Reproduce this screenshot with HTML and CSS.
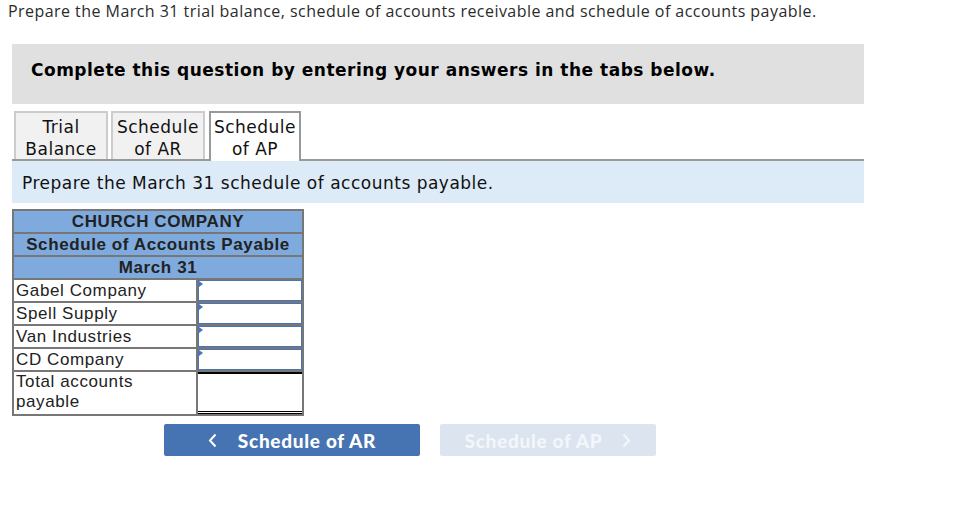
FILE: index.html
```html
<!DOCTYPE html>
<html>
<head>
<meta charset="utf-8">
<link rel="stylesheet" href="styles.css">
</head>
<body>
<p class="intro">Prepare the March 31 trial balance, schedule of accounts receivable and schedule of accounts payable.</p>
<div class="banner">Complete this question by entering your answers in the tabs below.</div>
<div class="tabs">
  <div class="tab">Trial<br>Balance</div>
  <div class="tab">Schedule<br>of AR</div>
  <div class="tab active">Schedule<br>of AP</div>
</div>
<div class="instr">Prepare the March 31 schedule of accounts payable.</div>
<table class="sched">
  <tr><th colspan="2">CHURCH COMPANY</th></tr>
  <tr><th colspan="2">Schedule of Accounts Payable</th></tr>
  <tr><th colspan="2">March 31</th></tr>
  <tr><td class="lbl">Gabel Company</td><td class="val"><div class="inp"></div></td></tr>
  <tr><td class="lbl">Spell Supply</td><td class="val"><div class="inp"></div></td></tr>
  <tr><td class="lbl">Van Industries</td><td class="val"><div class="inp"></div></td></tr>
  <tr><td class="lbl">CD Company</td><td class="val"><div class="inp"></div></td></tr>
  <tr class="total"><td class="lbl">Total accounts<br>payable</td><td class="val tot"><div class="totbox"></div></td></tr>
</table>
<div class="nav">
  <div class="btn prev"><svg class="chev" width="9" height="15" viewBox="0 0 9 15"><path d="M7.5 1.5 L2 7.5 L7.5 13.5" fill="none" stroke="#fff" stroke-width="2"/></svg>Schedule of AR</div>
  <div class="btn next">Schedule of AP<svg class="chev r" width="9" height="15" viewBox="0 0 9 15"><path d="M1.5 1.5 L7 7.5 L1.5 13.5" fill="none" stroke="#f3f6fa" stroke-width="2"/></svg></div>
</div>
</body>
</html>
```
FILE: styles.css
```css
html, body { margin: 0; padding: 0; background: #fff; }
body { padding: 0 8px; font-family: "Open Sans", "Lato", sans-serif; color: #222; }
.intro { margin: 0; padding-top: 1px; font-size: 16px; letter-spacing: 0.45px; line-height: 20px; color: #2b2b2b; }
.banner {
  margin: 23px 0 0 4px; width: 852px; height: 60px; box-sizing: border-box;
  background: #e0e0e0; padding: 15px 0 0 19px;
  font-family: "DejaVu Sans", Verdana, sans-serif; font-weight: bold; font-size: 17px; letter-spacing: 0.5px; color: #000; line-height: 22px;
}
.tabs {
  margin: 7px 0 0 4px; width: 852px; display: flex; gap: 3px;
  border-bottom: 2px solid #999; padding-left: 2px; box-sizing: border-box; height: 50px;
}
.tab {
  width: 94px; height: 48px; box-sizing: border-box; border: 2px solid #ccc; border-bottom: none;
  background: #f1f1f1; text-align: center; font-family: "DejaVu Sans", Verdana, sans-serif;
  font-size: 17px; letter-spacing: 0.5px; line-height: 22px; color: #111; padding-top: 3px;
}
.tab.active { background: #fff; border-color: #999; height: 50px; margin-bottom: -2px; margin-left: 1px; width: 92px; }
.instr {
  margin-left: 4px; width: 852px; height: 42px; box-sizing: border-box; background: #ddebf8;
  font-family: "DejaVu Sans", Verdana, sans-serif; font-size: 17px; letter-spacing: 0.5px; line-height: 44px; padding-left: 10px; color: #111;
}
.sched {
  margin: 6px 0 0 4px; border-collapse: collapse; width: 292px;
  font-family: "Liberation Sans", Arial, sans-serif; font-size: 17px; letter-spacing: 0.6px; color: #222;
}
.sched th, .sched td { border: 2px solid #777; padding: 0; }
.sched th { background: #7eaade; font-weight: bold; height: 21px; line-height: 19px; text-align: center; }
.sched td { height: 21px; line-height: 19px; }
.sched td.lbl { width: 180px; padding-left: 2px; text-align: left; white-space: nowrap; }
.sched td.val { width: 104px; padding: 0; vertical-align: top; }
.inp {
  height: 19px; border: 1px solid #4b74b4; margin: 0; position: relative; background: #fff;
}
.inp::before {
  content: ""; position: absolute; left: 0; top: 0; width: 0; height: 0;
  border-top: 3px solid transparent; border-bottom: 3px solid transparent; border-left: 4px solid #4b74b4;
}
.total td { height: 41px; line-height: 20px; vertical-align: top; }
.totbox { height: 37px; border-top: 2px solid #000; border-bottom: 3px double #000; }
.nav { display: flex; gap: 20px; margin: 8px 0 0 156px; }
.btn {
  height: 32px; border-radius: 2px; display: flex; align-items: center; justify-content: center;
  font-family: "Lato", "Open Sans", sans-serif; font-weight: 900; font-size: 19px; letter-spacing: 0.7px; color: #fff;
}
.btn.prev { width: 256px; background: #4673b1; }
.btn.next { width: 216px; background: #dbe4ef; color: #f3f6fa; }
.chev { margin-right: 21px; }
.chev.r { margin-right: 0; margin-left: 20px; }
```
